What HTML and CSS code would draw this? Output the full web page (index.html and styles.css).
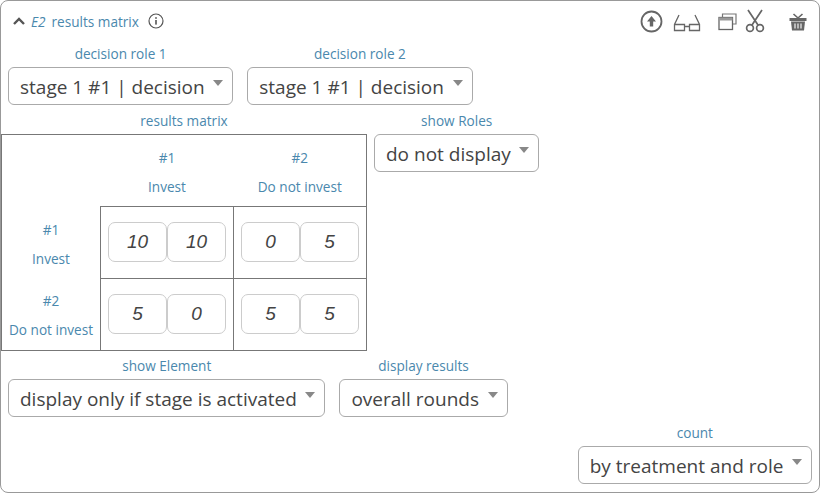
FILE: index.html
```html
<!DOCTYPE html>
<html lang="en">
<head>
<meta charset="utf-8">
<title>results matrix</title>
<link rel="stylesheet" href="styles.css">
</head>
<body>
<div class="card">
  <header class="head">
    <div class="title">
      <svg class="chev" width="12" height="8" viewBox="0 0 12 8"><path d="M1 7 L6 2 L11 7" fill="none" stroke="#555" stroke-width="2.4"/></svg>
      <em class="code">E2</em>
      <span>results matrix</span>
      <svg class="info" width="16" height="16" viewBox="0 0 16 16"><circle cx="8" cy="8" r="7" fill="none" stroke="#555" stroke-width="1.2"/><rect x="7.2" y="7" width="1.6" height="4.6" fill="#555"/><rect x="7.2" y="4.2" width="1.6" height="1.6" fill="#555"/></svg>
    </div>
    <div class="tools">
      <svg class="t-up" width="23" height="23" viewBox="0 0 23 23"><circle cx="11.5" cy="11.5" r="10" fill="none" stroke="#666" stroke-width="1.8"/><path d="M11.5 6 L16 11.5 H13.2 V16.5 H9.8 V11.5 H7 Z" fill="#666"/></svg>
      <svg class="t-glass" width="28" height="20" viewBox="0 0 28 20"><path d="M6 2 L1.5 11.5 V17.5 H11.5 V13.5 H16.5 V17.5 H26.5 V11.5 L22 2 M1.5 11.5 H11.5 V13.5 M16.5 13.5 V11.5 H26.5" fill="none" stroke="#666" stroke-width="1.3"/></svg>
      <svg class="t-win" width="19" height="18" viewBox="0 0 19 18"><path d="M4.5 4 V1 H18 V11 H14.5" fill="none" stroke="#777" stroke-width="1.2"/><rect x="1" y="4.5" width="13.5" height="12" fill="#fff" stroke="#666" stroke-width="1.3"/><rect x="1" y="4.5" width="13.5" height="3" fill="#999"/></svg>
      <svg class="t-scis" width="20" height="24" viewBox="0 0 20 24"><path d="M3 1 L13 16 M17 1 L7 16" fill="none" stroke="#666" stroke-width="1.7"/><circle cx="5" cy="19" r="3.4" fill="none" stroke="#666" stroke-width="1.7"/><circle cx="15" cy="19" r="3.4" fill="none" stroke="#666" stroke-width="1.7"/></svg>
      <svg class="t-bask" width="18" height="18" viewBox="0 0 18 18"><path d="M4.5 1 L9 5 L13.5 1" fill="none" stroke="#666" stroke-width="1.6"/><rect x="0.5" y="5" width="17" height="3" fill="#666"/><path d="M2 8.5 H16 L15 17.5 H3 Z" fill="#666"/><path d="M6 10.5 V15.5 M9 10.5 V15.5 M12 10.5 V15.5" stroke="#fff" stroke-width="1.1"/></svg>
    </div>
  </header>

  <div class="row row-roles">
    <div class="field">
      <label class="lbl">decision role 1</label>
      <div class="sel">stage 1 #1 | decision<i class="caret"></i></div>
    </div>
    <div class="field">
      <label class="lbl">decision role 2</label>
      <div class="sel">stage 1 #1 | decision<i class="caret"></i></div>
    </div>
  </div>

  <div class="row row-matrix">
    <div class="field matrix-field">
      <label class="lbl">results matrix</label>
      <table class="matrix">
        <tr>
          <th class="corner"></th>
          <th class="hd"><div>#1</div><div>Invest</div></th>
          <th class="hd"><div>#2</div><div>Do not invest</div></th>
        </tr>
        <tr>
          <th class="side"><div>#1</div><div>Invest</div></th>
          <td class="cell"><div class="pair"><span class="num">10</span><span class="num">10</span></div></td>
          <td class="cell"><div class="pair"><span class="num">0</span><span class="num">5</span></div></td>
        </tr>
        <tr>
          <th class="side"><div>#2</div><div>Do not invest</div></th>
          <td class="cell"><div class="pair"><span class="num">5</span><span class="num">0</span></div></td>
          <td class="cell"><div class="pair"><span class="num">5</span><span class="num">5</span></div></td>
        </tr>
      </table>
    </div>
    <div class="field">
      <label class="lbl">show Roles</label>
      <div class="sel">do not display<i class="caret"></i></div>
    </div>
  </div>

  <div class="row row-show">
    <div class="field">
      <label class="lbl">show Element</label>
      <div class="sel">display only if stage is activated<i class="caret"></i></div>
    </div>
    <div class="field">
      <label class="lbl">display results</label>
      <div class="sel">overall rounds<i class="caret"></i></div>
    </div>
  </div>

  <div class="row row-count">
    <div class="field">
      <label class="lbl">count</label>
      <div class="sel">by treatment and role<i class="caret"></i></div>
    </div>
  </div>
</div>
</body>
</html>
```
FILE: styles.css
```css
* { box-sizing: border-box; }
html, body { margin: 0; padding: 0; background: #fff; }
body { width: 820px; height: 493px; overflow: hidden; font-family: "Open Sans", sans-serif; }

.card {
  width: 820px;
  height: 493px;
  border: 1px solid #999;
  border-radius: 8px;
  background: #fff;
  overflow: hidden;
}

.head {
  display: flex;
  justify-content: space-between;
  height: 43px;
  padding: 9px 0 0 12px;
}
.title {
  display: flex;
  align-items: center;
  height: 22px;
  font-size: 13.6px;
  color: #4a88ad;
}
.chev { margin-right: 6px; }
.code { margin-right: 6px; }
.info { margin-left: 9px; }

.tools { display: flex; align-items: flex-start; padding-right: 12px; }
.t-up { margin-top: 0; }
.t-glass { margin: 3px 0 0 10px; }
.t-win { margin: 3px 0 0 17px; }
.t-scis { margin: -1px 0 0 8px; }
.t-bask { margin: 3px 0 0 24px; }

.row { display: flex; }
.row-roles { gap: 14px; padding-left: 7px; height: 67px; }
.row-matrix { gap: 7px; height: 245px; }
.row-show { gap: 14px; padding-left: 7px; height: 67px; }
.row-count { justify-content: flex-end; padding-right: 7px; }

.field { display: flex; flex-direction: column; align-items: stretch; }
.lbl {
  display: block;
  flex: none;
  height: 23px;
  line-height: 20px;
  font-size: 13.6px;
  color: #4a88ad;
  text-align: center;
}

.sel {
  display: flex;
  align-items: center;
  height: 38px;
  padding: 1px 9px 0 11px;
  border: 1px solid #aaa;
  border-radius: 6px;
  font-size: 19px;
  color: #444;
  white-space: nowrap;
}
.caret {
  width: 0;
  height: 0;
  margin: -7px 0 0 8.6px;
  border-left: 5.5px solid transparent;
  border-right: 5.5px solid transparent;
  border-top: 6px solid #888;
}

.matrix-field { width: 366px; }
.matrix {
  border-collapse: collapse;
  table-layout: fixed;
  width: 366px;
  height: 217px;
  border: 1px solid #777;
  font-weight: 400;
}
.corner { width: 99px; height: 72px; padding: 0; }
.hd, .side {
  padding: 3px 0 0;
  font-size: 13.6px;
  font-weight: 400;
  color: #4a88ad;
  text-align: center;
  line-height: 20px;
}
.hd div + div, .side div + div { margin-top: 9px; }
.hd { width: 133px; }
.cell { border: 1px solid #777; padding: 0 0 1px 7px; height: 72px; }
.pair { display: flex; }
.num {
  display: flex;
  align-items: center;
  justify-content: center;
  width: 59px;
  height: 40px;
  border: 1px solid #ccc;
  border-radius: 7px;
  font-family: "Liberation Sans", Arial, sans-serif;
  font-style: italic;
  font-size: 19px;
  color: #444;
}
```
